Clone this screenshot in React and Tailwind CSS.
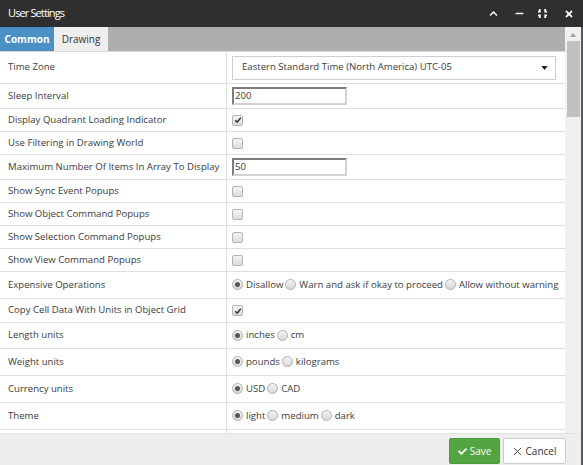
import { FaChevronUp, FaMinus, FaTimes, FaCheck } from "react-icons/fa";

const rows = [
  { label: "Time Zone", h: "h-[32px]", type: "select" },
  { label: "Sleep Interval", h: "h-[25px]", type: "input", value: "200" },
  { label: "Display Quadrant Loading Indicator", h: "h-[23px]", type: "check", checked: true },
  { label: "Use Filtering in Drawing World", h: "h-[23px]", type: "check" },
  { label: "Maximum Number Of Items In Array To Display", h: "h-[25px]", type: "input", value: "50" },
  { label: "Show Sync Event Popups", h: "h-[23px]", type: "check" },
  { label: "Show Object Command Popups", h: "h-[23px]", type: "check" },
  { label: "Show Selection Command Popups", h: "h-[23px]", type: "check" },
  { label: "Show View Command Popups", h: "h-[23px]", type: "check" },
  { label: "Expensive Operations", h: "h-[27px]", type: "radio", options: ["Disallow", "Warn and ask if okay to proceed", "Allow without warning"] },
  { label: "Copy Cell Data With Units in Object Grid", h: "h-[24px]", type: "check", checked: true },
  { label: "Length units", h: "h-[26px]", type: "radio", options: ["inches", "cm"] },
  { label: "Weight units", h: "h-[27px]", type: "radio", options: ["pounds", "kilograms"] },
  { label: "Currency units", h: "h-[27px]", type: "radio", options: ["USD", "CAD"] },
  { label: "Theme", h: "h-[27px]", type: "radio", options: ["light", "medium", "dark"] },
  { label: "", h: "h-[27px]", type: "none" },
];

function Checkbox({ checked }) {
  return (
    <span className="flex h-[11px] w-[11px] items-center justify-center rounded-[2px] border border-[#b4b4b4] bg-gradient-to-b from-[#f4f4f4] to-[#dcdcdc]">
      {checked && (
        <svg viewBox="0 0 10 10" className="h-[8px] w-[8px]">
          <path d="M1.5 5.2 L4 7.6 L8.6 2" fill="none" stroke="#333" strokeWidth="1.8" />
        </svg>
      )}
    </span>
  );
}

function Radio({ checked }) {
  return (
    <span className="flex h-[11px] w-[11px] shrink-0 items-center justify-center rounded-full border border-[#b0b0b0] bg-gradient-to-b from-[#f4f4f4] to-[#d8d8d8]">
      {checked && <span className="h-[5px] w-[5px] rounded-full bg-[#555]" />}
    </span>
  );
}

function Value({ row }) {
  if (row.type === "select") {
    return (
      <div className="flex h-[24px] w-[324px] items-center justify-between border border-[#cfcfcf] bg-white pl-[9px] pr-[7px]">
        <span>Eastern Standard Time (North America) UTC-05</span>
        <svg viewBox="0 0 8 5" className="h-[4px] w-[7px]">
          <path d="M0 0 H8 L4 5 Z" fill="#222" />
        </svg>
      </div>
    );
  }
  if (row.type === "input") {
    return (
      <div className="flex h-[18px] w-[115px] items-center border-2 border-[#7d7d7d] border-b-[#d2d2d2] border-r-[#d2d2d2] bg-white pl-[1px]">
        {row.value}
      </div>
    );
  }
  if (row.type === "check") return <Checkbox checked={row.checked} />;
  if (row.type === "radio") {
    return (
      <div className="flex items-center gap-[2px]">
        {row.options.map((o, i) => (
          <span key={o} className="flex items-center gap-[3px]">
            <Radio checked={i === 0} />
            <span>{o}</span>
          </span>
        ))}
      </div>
    );
  }
  return null;
}

export default function App() {
  return (
    <div className="flex h-[465px] w-[583px] flex-col whitespace-nowrap bg-[#4e5b66] font-['Open_Sans',sans-serif] text-[9.6px] text-[#3c3c3c]">
      {/* title bar */}
      <div className="flex h-[27px] w-[583px] shrink-0 items-center justify-between bg-[#2f2f2f] pl-[8px] pr-[9px] text-white">
        <span className="text-[11px] tracking-[-0.08em]">User Settings</span>
        <div className="flex items-center">
          <FaChevronUp className="mr-[17px] h-[9px] w-[9px]" />
          <FaMinus className="mr-[14px] h-[9px] w-[9px]" />
          <svg viewBox="0 0 10 10" className="mr-[17px] h-[9px] w-[9px]" fill="white">
            <path d="M1 0 H3 V4 H0 V2 H1 Z M7 0 H9 V2 H10 V4 H7 Z M0 6 H3 V10 H1 V8 H0 Z M7 6 H10 V8 H9 V10 H7 Z" />
          </svg>
          <FaTimes className="h-[10px] w-[10px]" />
        </div>
      </div>

      <div className="flex w-[581px] min-h-0 flex-1 flex-col bg-[#eeeeee]">
        <div className="flex h-[406px] shrink-0">
          {/* scrolling content */}
          <div className="flex w-[565px] flex-col overflow-hidden bg-white">
            <div className="flex h-[25px] shrink-0 items-stretch border-b border-[#d8d8d8] bg-[#adadad] text-[10px]">
              <div className="flex w-[54px] items-center justify-center bg-[#4b90c4] font-bold text-white">Common</div>
              <div className="flex w-[54px] items-center justify-center bg-[#eeeeee] text-[#333]">Drawing</div>
            </div>
            {rows.map((r, i) => (
              <div key={i} className={`flex ${r.h} shrink-0 border-b border-[#dedede]`}>
                <div className="flex w-[227px] shrink-0 items-center border-r border-[#dedede] pl-[8px]">{r.label}</div>
                <div className="flex flex-1 items-center pl-[5px]">
                  <Value row={r} />
                </div>
              </div>
            ))}
          </div>
          {/* scrollbar */}
          <div className="flex w-[16px] flex-col items-center bg-[#f0f0f0] pt-[6px]">
            <svg viewBox="0 0 8 5" className="h-[4px] w-[8px]">
              <path d="M0 5 H8 L4 0 Z" fill="#a3a3a3" />
            </svg>
            <div className="mt-[4px] h-[76px] w-[13px] bg-[#c1c1c1]" />
          </div>
        </div>

        {/* footer */}
        <div className="flex flex-1 items-start justify-end border-t border-[#e2e2e2] pr-[15px] pt-[4px]">
          <div className="flex h-[26px] w-[51px] items-center justify-center gap-[3px] rounded-[2px] border border-[#4a9a39] bg-[#52a540] text-[10px] text-white">
            <FaCheck className="h-[9px] w-[9px]" />
            <span>Save</span>
          </div>
          <div className="ml-[3px] flex h-[26px] w-[63px] items-center justify-center gap-[4px] rounded-[2px] border border-[#cccccc] bg-white text-[10px] text-[#333]">
            <svg viewBox="0 0 10 10" className="h-[9px] w-[9px]">
              <path d="M1 1 L9 9 M9 1 L1 9" stroke="#444" strokeWidth="1" />
            </svg>
            <span>Cancel</span>
          </div>
        </div>
      </div>
    </div>
  );
}
